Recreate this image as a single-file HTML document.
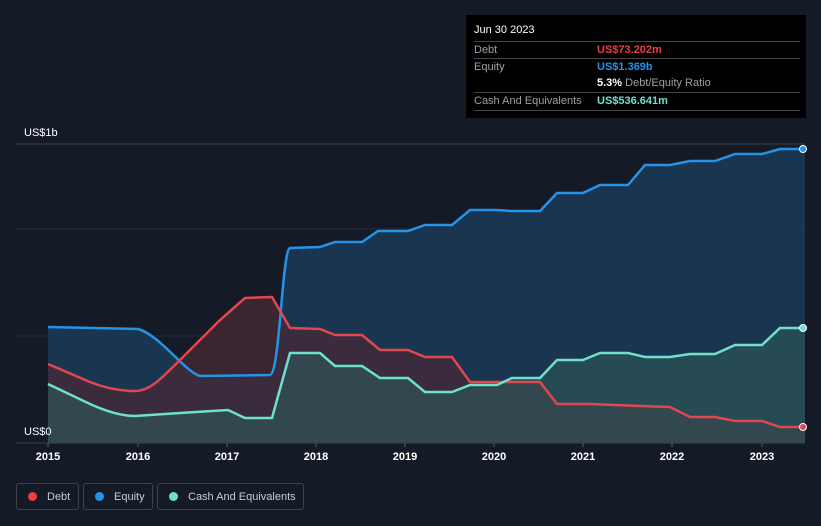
<!DOCTYPE html>
<html><head><style>
body{margin:0;width:821px;height:526px;background:#151b26;font-family:"Liberation Sans",sans-serif;overflow:hidden;position:relative}
.tt{position:absolute;left:466px;top:15px;width:340px;height:103px;background:#000;color:#fff;font-size:11px}
.row{position:absolute;left:8px;width:326px;height:17px;border-top:1px solid #444;line-height:17px}
.lab{color:#9aa0a8;position:absolute;left:0}
.val{position:absolute;left:123px;font-weight:bold}
.leg{position:absolute;top:483px;height:27px;border:1px solid #3d434d;border-radius:3px;color:#c8ccd2;font-size:11px;line-height:27px;box-sizing:border-box}
.dot{display:inline-block;width:9px;height:9px;border-radius:50%;margin:0 10px 0 11px;vertical-align:-1px}
.ax{position:absolute;top:451px;color:#fff;font-size:11px;font-weight:bold;transform:translateX(-50%)}
</style></head><body>
<svg width="821" height="526" style="position:absolute;left:0;top:0">
<line x1="16" y1="144" x2="805" y2="144" stroke="#3a414c"/>
<line x1="16" y1="229" x2="805" y2="229" stroke="#252c38"/>
<line x1="16" y1="336" x2="805" y2="336" stroke="#252c38"/>
<line x1="16" y1="443" x2="805" y2="443" stroke="#3a414c"/>
<path d="M48,327 L138,329 C160,335 185,372 200,376 L270,375 C280,373 282,250 290,248 L320,247 L335,242 L362,242 L378,231 L408,231 L425,225 L452,225 L470,210 L497,210 L510,211 L540,211 L557,193 L583,193 L600,185 L628,185 L645,165 L670,165 L690,161 L715,161 L735,154 L762,154 L780,149 L805,149 L805,443 L48,443Z" fill="#1b3a57" opacity="0.85"/>
<path d="M48,364 L90,382 C110,390 125,391 135,391 C150,391 160,380 185,355 L220,320 L245,298 L272,297 L290,328 L320,329 L335,335 L362,335 L380,350 L408,350 L425,357 L452,357 L470,382 L540,382 L557,404 L590,404 L640,406 L670,407 L690,417 L715,417 L735,421 L762,421 L780,427 L805,427 L805,443 L48,443Z" fill="#4a2a36" opacity="0.7"/>
<path d="M48,384 L90,404 C110,413 125,416 135,416 L180,413 L228,410 L245,418 L272,418 L290,353 L320,353 L335,366 L362,366 L380,378 L408,378 L425,392 L452,392 L470,385 L497,385 L512,378 L540,378 L557,360 L583,360 L600,353 L628,353 L645,357 L670,357 L690,354 L715,354 L735,345 L762,345 L780,328 L805,328 L805,443 L48,443Z" fill="#2e5a5a" opacity="0.6"/>
<path d="M48,327 L138,329 C160,335 185,372 200,376 L270,375 C280,373 282,250 290,248 L320,247 L335,242 L362,242 L378,231 L408,231 L425,225 L452,225 L470,210 L497,210 L510,211 L540,211 L557,193 L583,193 L600,185 L628,185 L645,165 L670,165 L690,161 L715,161 L735,154 L762,154 L780,149 L805,149" fill="none" stroke="#2394e8" stroke-width="2.5"/>
<path d="M48,364 L90,382 C110,390 125,391 135,391 C150,391 160,380 185,355 L220,320 L245,298 L272,297 L290,328 L320,329 L335,335 L362,335 L380,350 L408,350 L425,357 L452,357 L470,382 L540,382 L557,404 L590,404 L640,406 L670,407 L690,417 L715,417 L735,421 L762,421 L780,427 L805,427" fill="none" stroke="#e0474f" stroke-width="2.5"/>
<path d="M48,384 L90,404 C110,413 125,416 135,416 L180,413 L228,410 L245,418 L272,418 L290,353 L320,353 L335,366 L362,366 L380,378 L408,378 L425,392 L452,392 L470,385 L497,385 L512,378 L540,378 L557,360 L583,360 L600,353 L628,353 L645,357 L670,357 L690,354 L715,354 L735,345 L762,345 L780,328 L805,328" fill="none" stroke="#6de0cf" stroke-width="2.5"/>
<circle cx="803" cy="149" r="3.5" fill="#2394e8" stroke="#fff"/>
<circle cx="803" cy="328" r="3.5" fill="#6de0cf" stroke="#fff"/>
<circle cx="803" cy="427" r="3.5" fill="#e0474f" stroke="#fff"/>
<g stroke="#555c66"><line x1="48" y1="443" x2="48" y2="447"/><line x1="138" y1="443" x2="138" y2="447"/><line x1="227" y1="443" x2="227" y2="447"/><line x1="316" y1="443" x2="316" y2="447"/><line x1="405" y1="443" x2="405" y2="447"/><line x1="494" y1="443" x2="494" y2="447"/><line x1="583" y1="443" x2="583" y2="447"/><line x1="672" y1="443" x2="672" y2="447"/><line x1="762" y1="443" x2="762" y2="447"/></g>
<text x="24" y="136" fill="#fff" font-size="11" font-family="Liberation Sans">US$1b</text>
<text x="24" y="435" fill="#fff" font-size="11" font-family="Liberation Sans">US$0</text>
</svg>
<div class="ax" style="left:48px">2015</div><div class="ax" style="left:138px">2016</div><div class="ax" style="left:227px">2017</div><div class="ax" style="left:316px">2018</div><div class="ax" style="left:405px">2019</div><div class="ax" style="left:494px">2020</div><div class="ax" style="left:583px">2021</div><div class="ax" style="left:672px">2022</div><div class="ax" style="left:762px">2023</div>
<div class="tt">
<div style="position:absolute;left:8px;top:9px;font-size:11px">Jun 30 2023</div>
<div class="row" style="top:26px"><span class="lab">Debt</span><span class="val" style="color:#e8404a">US$73.202m</span></div>
<div class="row" style="top:43px"><span class="lab">Equity</span><span class="val" style="color:#2394e8">US$1.369b</span></div>
<div class="row" style="top:60px;border-top:none"><span class="val" style="color:#fff">5.3% <span style="color:#9aa0a8;font-weight:normal">Debt/Equity Ratio</span></span></div>
<div class="row" style="top:77px"><span class="lab">Cash And Equivalents</span><span class="val" style="color:#6de0cf">US$536.641m</span></div>
<div class="row" style="top:95px;height:0"></div>
</div>
<div class="leg" style="left:16px;width:63px"><span class="dot" style="background:#e8404a"></span>Debt</div>
<div class="leg" style="left:83px;width:70px"><span class="dot" style="background:#2394e8"></span>Equity</div>
<div class="leg" style="left:157px;width:147px"><span class="dot" style="background:#6de0cf"></span>Cash And Equivalents</div>
</body></html>
